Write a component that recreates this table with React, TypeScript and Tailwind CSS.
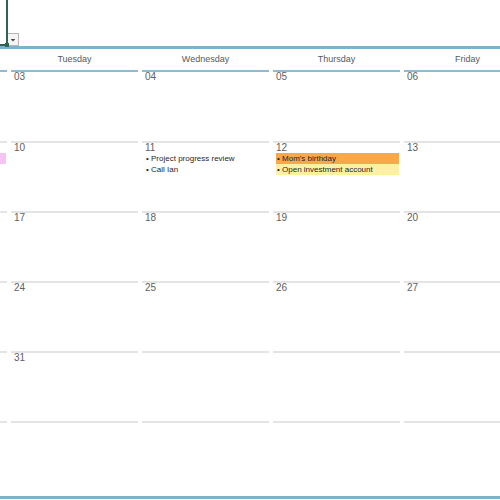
import React from "react";

type Ev = { text: string; color?: string };
type Cell = { day?: string; events?: Ev[] };

// Monday is scrolled mostly out of view: only its grid lines and event bar colour show
const days = ["", "Tuesday", "Wednesday", "Thursday", "Friday"];

const weeks: Cell[][] = [
  [{}, { day: "03" }, { day: "04" }, { day: "05" }, { day: "06" }],
  [
    { events: [{ text: "", color: "bg-[#f5c4f2]" }] },
    { day: "10" },
    { day: "11", events: [{ text: "Project progress review" }, { text: "Call Ian" }] },
    {
      day: "12",
      events: [
        { text: "Mom's birthday", color: "bg-[#f7a84c]" },
        { text: "Open investment account", color: "bg-[#fdf0a2]" },
      ],
    },
    { day: "13" },
  ],
  [{}, { day: "17" }, { day: "18" }, { day: "19" }, { day: "20" }],
  [{}, { day: "24" }, { day: "25" }, { day: "26" }, { day: "27" }],
  [{}, { day: "31" }, {}, {}, {}],
  [{}, {}, {}, {}, {}],
];

const rowHeights = ["h-[71px]", "h-[70px]", "h-[70px]", "h-[70px]", "h-[70px]", "h-[75px]"];

export default function App() {
  return (
    <div className="relative h-[500px] w-[500px] overflow-hidden bg-white font-['Liberation_Sans',Arial,sans-serif]">
      {/* sheet chrome: selected cell + dropdown */}
      <div className="relative flex h-[46px] items-end">
        <div className="absolute -left-[12px] -top-[4px] h-[50px] w-[20px] border-2 border-[#2f6450]" />
        <div className="absolute left-[5px] top-[43px] h-[4px] w-[4px] bg-[#2f6450]" />
        <div className="ml-[7px] flex h-[13px] w-[12px] items-center justify-center border border-[#b5b5b5] bg-[#f4f4f4]">
          <svg viewBox="0 0 8 8" className="h-[6px] w-[6px]" aria-hidden="true">
            <path d="M1 2.5h6L4 6z" fill="#444" />
          </svg>
        </div>
      </div>
      <div className="h-[3px] bg-[#7ab2d0]" />

      {/* weekday header */}
      <div className="-ml-[120px] grid h-[21px] grid-cols-[repeat(5,127px)] gap-x-[4px]">
        {days.map((d, i) => (
          <div key={i} className="flex items-center justify-center text-[9px] text-[#595959]">
            {d}
          </div>
        ))}
      </div>

      {/* weeks */}
      {weeks.map((week, wi) => (
        <div key={wi} className={`-ml-[120px] grid grid-cols-[repeat(5,127px)] gap-x-[4px] ${rowHeights[wi]}`}>
          {week.map((c, ci) => (
            <div
              key={ci}
              className={`border-t-2 ${wi === 0 ? "border-[#8dbbd5]" : "border-[#e4e4e4]"}`}
            >
              <div className="h-[10px] pl-[3px] text-[10px] leading-[10px] text-[#606060]">{c.day}</div>
              <div className="ml-[3px] mr-[1px] flex flex-col">
                {c.events?.map((e, ei) => (
                  <div
                    key={ei}
                    className={`h-[11px] truncate pl-[1px] text-[8px] leading-[11px] text-[#1f1f1f] ${e.color ?? ""}`}
                  >
                    {e.text ? `• ${e.text}` : ""}
                  </div>
                ))}
              </div>
            </div>
          ))}
        </div>
      ))}

      <div className="h-[3px] bg-[#7ab2d0]" />
    </div>
  );
}
